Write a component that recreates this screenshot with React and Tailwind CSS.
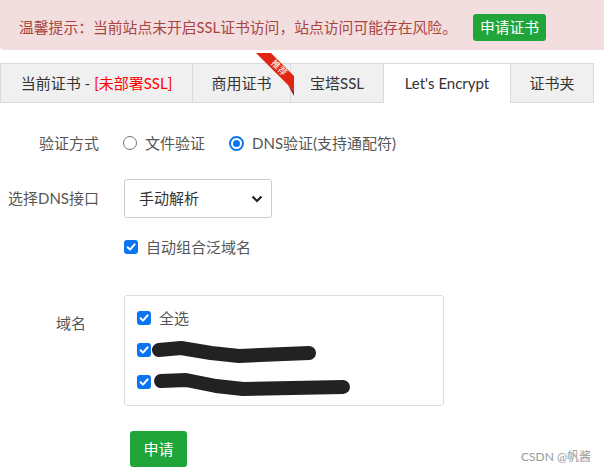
import React from "react";

const FONT = { fontFamily: '"Lato","Noto Sans CJK SC",sans-serif' };

function Check({ className = "" }) {
  return (
    <span className={"inline-flex h-[14px] w-[14px] items-center justify-center rounded-[3px] bg-[#0b75f0] " + className}>
      <svg width="10" height="10" viewBox="0 0 10 10">
        <polyline points="1.6,5.2 4,7.6 8.6,2.4" fill="none" stroke="#fff" strokeWidth="2" strokeLinecap="round" strokeLinejoin="round" />
      </svg>
    </span>
  );
}

function Tab({ w, active, children, extra }) {
  return (
    <div
      className={
        "relative flex h-[40px] items-center justify-center border-t border-l border-[#d9d9e0] text-[15px] " +
        (active ? "bg-white" : "bg-[#f0f0f0] border-b") +
        " " + w
      }
    >
      {children}
      {extra}
    </div>
  );
}

export default function App() {
  return (
    <div className="relative h-[471px] w-[604px] overflow-hidden bg-white text-[#333]" style={FONT}>
      {/* alert */}
      <div className="flex h-[50px] items-center rounded-bl-[4px] bg-[#f2dede] pl-[19px] pt-[5px] text-[14.8px] text-[#a94442]">
        <span>温馨提示：当前站点未开启SSL证书访问，站点访问可能存在风险。</span>
        <span className="ml-[16px] flex h-[27px] items-center rounded-[3px] bg-[#20a53a] px-[7px] text-white">申请证书</span>
      </div>

      {/* tabs */}
      <div className="mt-[13px] flex">
        <Tab w="w-[192px]">
          <span>当前证书 - </span>
          <span className="ml-[4px] text-[#ff0000]">[未部署SSL]</span>
        </Tab>
        <Tab
          w="w-[98px]"
          extra={
            <svg className="absolute left-[63px] top-[-11px] z-10" width="40" height="44" viewBox="0 0 40 44">
              <polygon points="0,0 15,0 38,23 38,38" fill="#e02612" />
              <polygon points="32,32 38,38 38,43" fill="#9a1b0c" />
              <text x="21" y="17" fill="#fff" fontSize="9" transform="rotate(45 21 17)" textAnchor="middle" style={FONT}>推荐</text>
            </svg>
          }
        >
          商用证书
        </Tab>
        <Tab w="w-[93px]">宝塔SSL</Tab>
        <Tab w="w-[127px]" active>
          Let's Encrypt
        </Tab>
        <div className="flex h-[40px] w-[84px] items-center justify-center border-x border-t border-b border-[#d9d9e0] bg-[#f0f0f0] text-[15px]">
          证书夹
        </div>
      </div>

      {/* form */}
      <div className="text-[15px] text-[#555]">
        <div className="mt-[30px] flex h-[20px] items-center">
          <div className="w-[99px] text-right">验证方式</div>
          <div className="ml-[24px] flex items-center">
            <span className="h-[14px] w-[14px] rounded-full border border-[#777]" />
            <span className="ml-[8px]">文件验证</span>
            <span className="ml-[24px] flex h-[15px] w-[15px] items-center justify-center rounded-full border-2 border-[#0b75f0]">
              <span className="h-[7px] w-[7px] rounded-full bg-[#0b75f0]" />
            </span>
            <span className="ml-[8px]">DNS验证(支持通配符)</span>
          </div>
        </div>

        <div className="mt-[26px] flex h-[39px] items-center">
          <div className="w-[99px] text-right">选择DNS接口</div>
          <div className="ml-[25px] flex h-[39px] w-[148px] items-center justify-between rounded-[3px] border border-[#ccc] pl-[14px] pr-[8px] text-[#333]">
            <span>手动解析</span>
            <svg width="12" height="8" viewBox="0 0 12 8">
              <polyline points="1.5,1.5 6,6 10.5,1.5" fill="none" stroke="#222" strokeWidth="2.2" />
            </svg>
          </div>
        </div>

        <div className="mt-[19px] flex h-[20px] items-center pl-[124px]">
          <Check />
          <span className="ml-[8px]">自动组合泛域名</span>
        </div>

        <div className="mt-[38px] flex">
          <div className="w-[86px] pt-[17px] text-right">域名</div>
          <div className="relative ml-[38px] flex h-[111px] w-[320px] flex-col gap-[12px] rounded-[3px] border border-[#ddd] pl-[12px] pt-[12px]">
            <div className="flex h-[20px] items-center">
              <Check />
              <span className="ml-[8px]">全选</span>
            </div>
            <div className="flex h-[20px] items-center">
              <Check />
            </div>
            <div className="flex h-[20px] items-center">
              <Check />
            </div>
            <svg className="absolute left-0 top-0" width="320" height="111" viewBox="124 295 320 111">
              <polyline points="158,349 180,347 210,352 238,355 308,352" fill="none" stroke="#222" strokeWidth="14" strokeLinecap="round" strokeLinejoin="round" />
              <polyline points="160,380 185,379 215,385 242,388 342,386" fill="none" stroke="#222" strokeWidth="14" strokeLinecap="round" strokeLinejoin="round" />
            </svg>
          </div>
        </div>

        <div className="mt-[25px] pl-[130px]">
          <span className="flex h-[36px] w-[57px] items-center justify-center rounded-[3px] bg-[#20a53a] text-white">申请</span>
        </div>
      </div>

      <div className="absolute left-[521px] top-[448px] text-[12px] text-[#999]">CSDN @帆酱</div>
    </div>
  );
}
